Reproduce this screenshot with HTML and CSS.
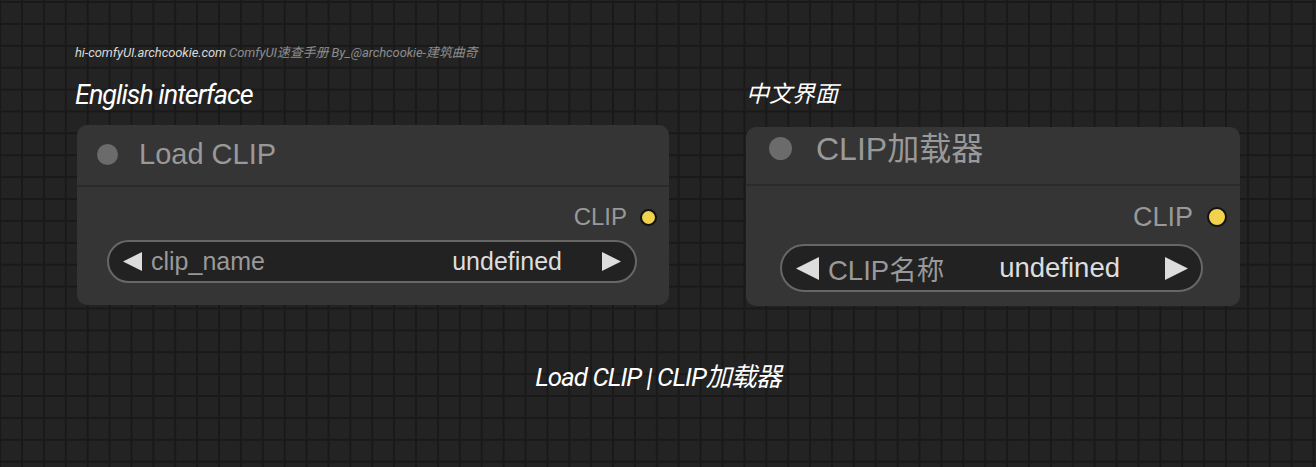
FILE: index.html
```html
<!DOCTYPE html>
<html lang="en">
<head>
    <meta charset="UTF-8">
    <meta name="viewport" content="width=device-width, initial-scale=1.0">
    <title>Load CLIP | CLIP加载器</title>
    <link rel="stylesheet" href="styles.css">
</head>
<body>
    <div class="page">
        <p class="credit"><span class="credit-site">hi-comfyUI.archcookie.com</span> ComfyUI速查手册 By_@archcookie-建筑曲奇</p>

        <div class="columns">
            <section class="column column-en">
                <h2 class="column-title">English interface</h2>
                <div class="node node-en">
                    <div class="node-header">
                        <span class="node-dot"></span>
                        <span class="node-title">Load CLIP</span>
                    </div>
                    <div class="node-body">
                        <div class="node-output">
                            <span class="output-label">CLIP</span>
                            <span class="output-dot"></span>
                        </div>
                        <div class="combo">
                            <svg class="arrow" viewBox="0 0 20 20"><polygon points="20,0 20,20 0,10"/></svg>
                            <span class="combo-name">clip_name</span>
                            <span class="combo-value">undefined</span>
                            <svg class="arrow" viewBox="0 0 20 20"><polygon points="0,0 0,20 20,10"/></svg>
                        </div>
                    </div>
                </div>
            </section>

            <section class="column column-zh">
                <h2 class="column-title">中文界面</h2>
                <div class="node node-zh">
                    <div class="node-header">
                        <span class="node-dot"></span>
                        <span class="node-title">CLIP加载器</span>
                    </div>
                    <div class="node-body">
                        <div class="node-output">
                            <span class="output-label">CLIP</span>
                            <span class="output-dot"></span>
                        </div>
                        <div class="combo">
                            <svg class="arrow" viewBox="0 0 20 20"><polygon points="20,0 20,20 0,10"/></svg>
                            <span class="combo-name">CLIP名称</span>
                            <span class="combo-value">undefined</span>
                            <svg class="arrow" viewBox="0 0 20 20"><polygon points="0,0 0,20 20,10"/></svg>
                        </div>
                    </div>
                </div>
            </section>
        </div>

        <p class="caption">Load CLIP | CLIP加载器</p>
    </div>
</body>
</html>
```

FILE: styles.css
```css
body {
    margin: 0;
    height: 467px;
    overflow: hidden;
    font-family: 'Liberation Sans', Arial, 'Noto Sans CJK SC', sans-serif;
    background-color: #232323;
    background-image:
        linear-gradient(90deg, #191919 2px, transparent 2px),
        linear-gradient(#191919 2px, transparent 2px);
    background-size: 21.9px 21.9px;
    background-position: 21px 1px;
}

.page {
    padding: 44px 0 0 75px;
}

/* italic condensed labels */
.credit,
.column-title,
.caption {
    font-family: Roboto, 'Noto Sans CJK SC', sans-serif;
    font-style: italic;
    margin: 0;
}

.credit {
    font-size: 13px;
    line-height: 18px;
    letter-spacing: -0.1px;
    color: #8c8c8c;
}

.credit-site {
    color: #d8d8d8;
}

.columns {
    display: flex;
    margin-top: 17px;
}

.column-en {
    width: 594px;
}

.column-zh {
    margin-left: 77px;
}

.column-title {
    font-size: 27px;
    font-weight: normal;
    line-height: 32px;
    letter-spacing: -1px;
    color: #fff;
    margin-bottom: 14px;
}

.column-zh .column-title {
    font-size: 23px;
    letter-spacing: 0;
    margin-bottom: 16px;
}

/* node card */
.node {
    background: #353535;
    border-radius: 10px;
    color: #999;
}

.node-en {
    margin-left: 2px;
    width: 592px;
}

.node-zh {
    width: 494px;
}

.node-header {
    display: flex;
    align-items: center;
    border-bottom: 2px solid #2b2b2b;
}

.node-dot {
    flex: none;
    border-radius: 50%;
    background: #6b6b6b;
}

.node-en .node-header {
    height: 60px;
    padding-left: 20px;
}

.node-en .node-dot {
    width: 21px;
    height: 21px;
    margin-right: 21px;
    margin-top: -2px;
}

.node-en .node-title {
    font-size: 29px;
    margin-top: -2px;
}

.node-zh .node-header {
    height: 57px;
    padding-left: 23px;
}

.node-zh .node-dot {
    width: 23px;
    height: 23px;
    margin-right: 24px;
    margin-top: -14px;
}

.node-zh .node-title {
    font-size: 32px;
    margin-top: -20px;
}

.node-output {
    display: flex;
    justify-content: flex-end;
    align-items: center;
}

.output-dot {
    flex: none;
    border-radius: 50%;
    background: #f2d24c;
    border: 2px solid #111;
    box-sizing: border-box;
}

.node-en .node-body {
    padding: 17px 12px 22px 30px;
}

.node-en .node-output {
    height: 26px;
    margin-bottom: 10px;
}

.node-en .output-label {
    font-size: 24px;
    margin-right: 13px;
}

.node-en .output-dot {
    width: 17px;
    height: 17px;
}

.node-zh .node-body {
    padding: 16px 13px 14px 34px;
}

.node-zh .node-output {
    height: 30px;
    margin-bottom: 12px;
}

.node-zh .output-label {
    font-size: 27px;
    margin-right: 14px;
}

.node-zh .output-dot {
    width: 20px;
    height: 20px;
}

/* combo widget */
.combo {
    display: flex;
    align-items: center;
    box-sizing: border-box;
    background: #222;
    border: 2px solid #676767;
    border-radius: 30px;
}

.combo .arrow {
    flex: none;
    fill: #ddd;
}

.combo-name {
    flex: 1;
}

.combo-value {
    color: #ddd;
}

.node-en .combo {
    width: 530px;
    height: 43px;
    padding: 0 13px 0 13px;
    font-size: 25px;
}

.node-en .combo .arrow {
    width: 21px;
    height: 19px;
}

.node-en .combo-name {
    margin-left: 8px;
}

.node-en .combo-value {
    margin-right: 39px;
}

.node-zh .combo {
    width: 423px;
    height: 48px;
    padding: 0 13px 0 14px;
    font-size: 27.5px;
}

.node-zh .combo .arrow {
    width: 23px;
    height: 23px;
}

.node-zh .combo-name {
    margin-left: 9px;
}

.node-zh .combo-value {
    margin-right: 45px;
}

.caption {
    font-size: 26px;
    line-height: 32px;
    letter-spacing: -1px;
    color: #fff;
    text-align: center;
    margin: 55px 0 0 -75px;
}
```
